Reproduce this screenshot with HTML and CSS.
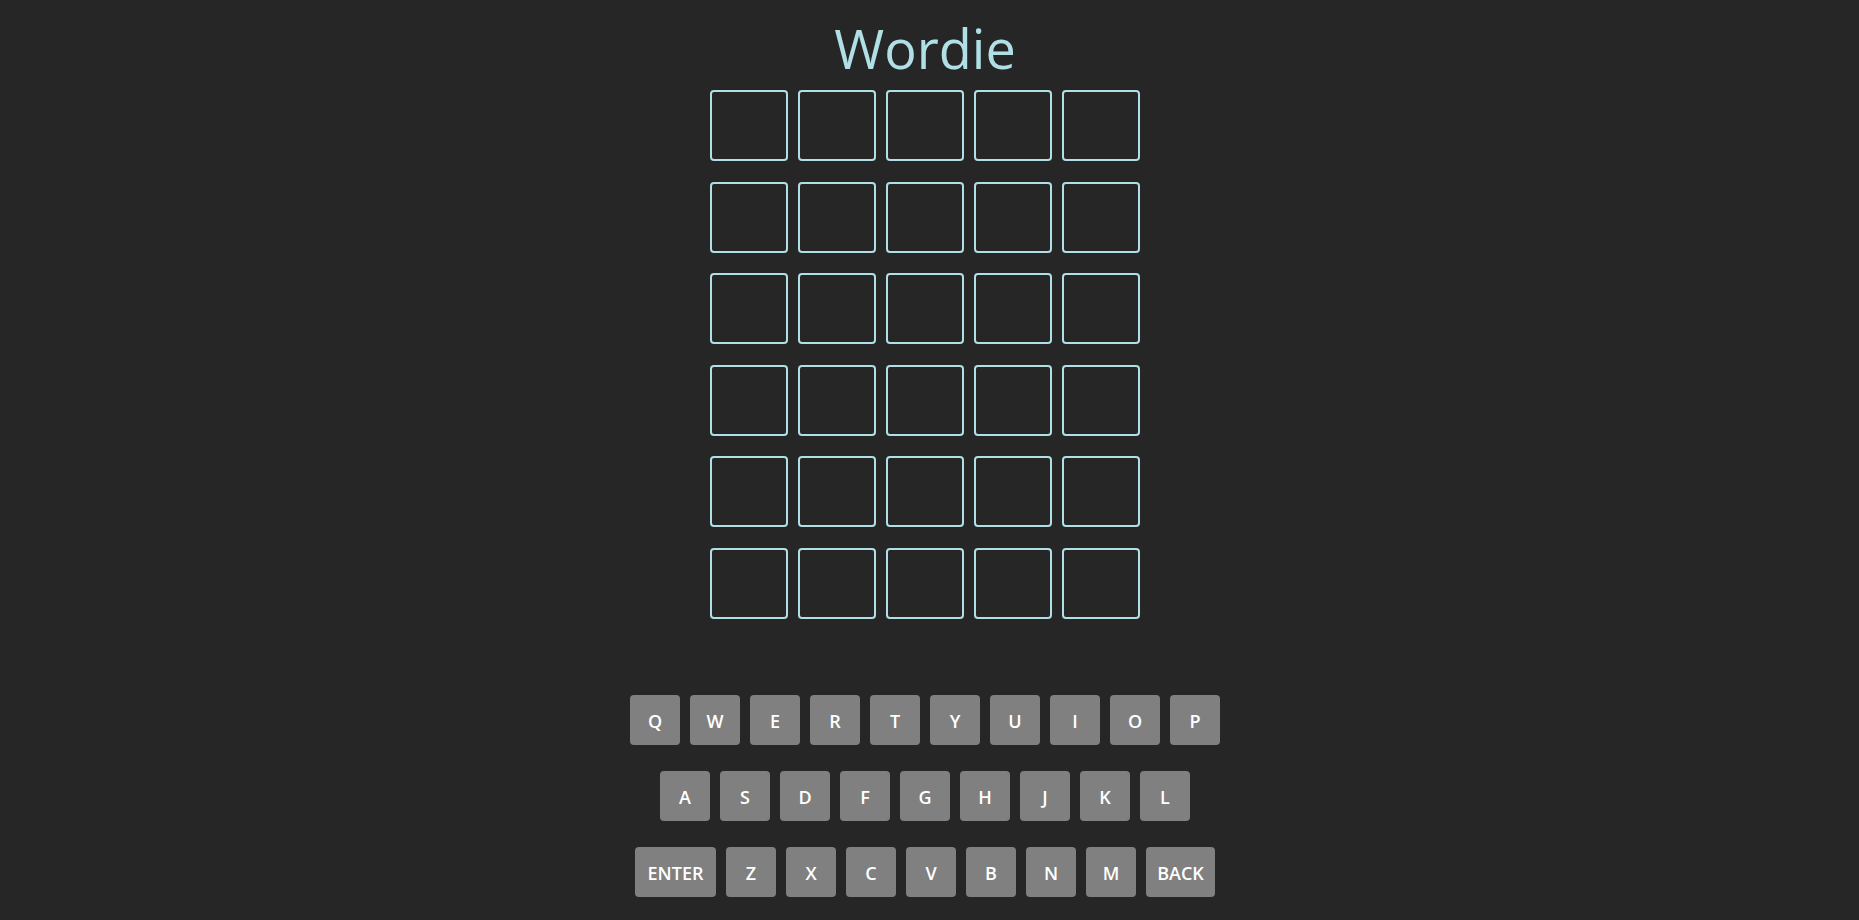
FILE: index.html
```html
<!DOCTYPE html>
<html lang="en">
<head>
<meta charset="utf-8">
<title>Wordie</title>
<link rel="stylesheet" href="styles.css">
</head>
<body>
<div class="app">
  <h1 class="title">Wordie</h1>
  <div class="board">
    <div class="tile"></div><div class="tile"></div><div class="tile"></div><div class="tile"></div><div class="tile"></div>
    <div class="tile"></div><div class="tile"></div><div class="tile"></div><div class="tile"></div><div class="tile"></div>
    <div class="tile"></div><div class="tile"></div><div class="tile"></div><div class="tile"></div><div class="tile"></div>
    <div class="tile"></div><div class="tile"></div><div class="tile"></div><div class="tile"></div><div class="tile"></div>
    <div class="tile"></div><div class="tile"></div><div class="tile"></div><div class="tile"></div><div class="tile"></div>
    <div class="tile"></div><div class="tile"></div><div class="tile"></div><div class="tile"></div><div class="tile"></div>
  </div>
  <div class="keyboard">
    <div class="key-row">
      <button class="key">Q</button><button class="key">W</button><button class="key">E</button><button class="key">R</button><button class="key">T</button><button class="key">Y</button><button class="key">U</button><button class="key">I</button><button class="key">O</button><button class="key">P</button>
    </div>
    <div class="key-row">
      <button class="key">A</button><button class="key">S</button><button class="key">D</button><button class="key">F</button><button class="key">G</button><button class="key">H</button><button class="key">J</button><button class="key">K</button><button class="key">L</button>
    </div>
    <div class="key-row">
      <button class="key key-enter">ENTER</button><button class="key">Z</button><button class="key">X</button><button class="key">C</button><button class="key">V</button><button class="key">B</button><button class="key">N</button><button class="key">M</button><button class="key key-back">BACK</button>
    </div>
  </div>
</div>
</body>
</html>
```
FILE: styles.css
```css
html, body {
  margin: 0;
  padding: 0;
  background: #262626;
  height: 100%;
}

body {
  font-family: "Open Sans", "Noto Sans", sans-serif;
  overflow: hidden;
}

.app {
  width: 1850px;
  display: flex;
  flex-direction: column;
  align-items: center;
}

.title {
  margin: 21px 0 0;
  font-size: 54px;
  line-height: 54px;
  font-weight: 500;
  color: #b0e0e6;
}

.board {
  margin-top: 15px;
  display: grid;
  grid-template-columns: repeat(5, 78px);
  grid-auto-rows: 71px;
  column-gap: 10px;
  row-gap: 20.6px;
}

.tile {
  box-sizing: border-box;
  border: 2px solid #b0e0e6;
  border-radius: 4px;
}

.keyboard {
  margin-top: 76px;
  display: flex;
  flex-direction: column;
  align-items: center;
  gap: 26px;
}

.key-row {
  display: flex;
  gap: 10px;
}

.key {
  box-sizing: border-box;
  width: 50px;
  height: 50px;
  padding: 2px 0 0;
  border: none;
  border-radius: 4px;
  background: #808080;
  color: #ffffff;
  font-family: "Open Sans", "Noto Sans", sans-serif;
  font-size: 18px;
  font-weight: 600;
  display: flex;
  align-items: center;
  justify-content: center;
}

.key-enter {
  width: 81px;
}

.key-back {
  width: 69px;
}
```
